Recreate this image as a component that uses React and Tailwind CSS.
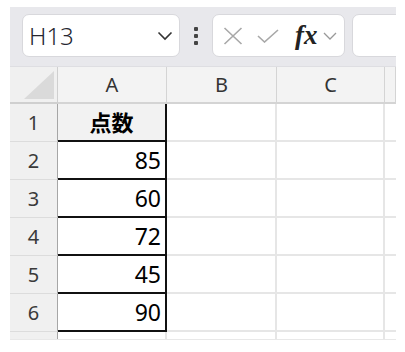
import React from "react";

const rows = [
  { n: 1, v: "点数", head: true },
  { n: 2, v: "85" },
  { n: 3, v: "60" },
  { n: 4, v: "72" },
  { n: 5, v: "45" },
  { n: 6, v: "90" },
];

const font = { fontFamily: '"Noto Sans", "Noto Sans CJK JP", sans-serif' };

function Toolbar() {
  return (
    <div className="flex h-[60px] items-start bg-[#e8e8ec] pl-[12px] pt-[7px] border-b border-[#dedee2] overflow-hidden">
      {/* name box */}
      <div className="flex h-[43px] w-[158px] shrink-0 items-center justify-between rounded-[7px] border border-[#d8d8dc] bg-white pl-[6px] pr-[6px]">
        <span className="text-[24px] font-light text-[#262630] leading-none">H13</span>
        <svg width="16" height="10" viewBox="0 0 16 10" fill="none" stroke="#333" strokeWidth="1.6">
          <path d="M1.5 1.5 L8 8 L14.5 1.5" />
        </svg>
      </div>
      {/* dots */}
      <div className="flex h-[43px] w-[32px] shrink-0 flex-col items-center justify-center gap-[3px]">
        <span className="h-[4px] w-[4px] rounded-[1px] bg-[#444]" />
        <span className="h-[4px] w-[4px] rounded-[1px] bg-[#444]" />
        <span className="h-[4px] w-[4px] rounded-[1px] bg-[#444]" />
      </div>
      {/* formula buttons */}
      <div className="flex h-[43px] w-[133px] shrink-0 items-center rounded-[7px] border border-[#d8d8dc] bg-white pl-[10px]">
        <svg width="20" height="18" viewBox="0 0 20 18" fill="none" stroke="#a8a8a8" strokeWidth="1.6">
          <path d="M1.5 1 L18.5 17 M18.5 1 L1.5 17" />
        </svg>
        <svg className="ml-[14px]" width="22" height="14" viewBox="0 0 22 14" fill="none" stroke="#a8a8a8" strokeWidth="1.6">
          <path d="M1 7 L7.5 13 L21 1" />
        </svg>
        <span
          className="ml-[16px] text-[27px] font-bold italic leading-none text-[#222]"
          style={{ fontFamily: '"Liberation Serif", serif' }}
        >
          fx
        </span>
        <svg className="ml-[5px]" width="14" height="8" viewBox="0 0 14 8" fill="none" stroke="#999" strokeWidth="1.3">
          <path d="M1 1 L7 7 L13 1" />
        </svg>
      </div>
      {/* formula input */}
      <div className="ml-[7px] h-[43px] w-[80px] shrink-0 rounded-[7px] border border-[#d8d8dc] bg-white" />
    </div>
  );
}

function Grid() {
  return (
    <div className="grid grid-cols-[48px_109px_110px_108px_11px] grid-rows-[37px_38px_38px_38px_38px_38px_38px_7px] bg-white">
      {/* header row */}
      <div className="relative bg-[#f0f0f0] border-b-2 border-r border-[#cfcfcf]">
        <svg className="absolute right-[3px] bottom-[3px]" width="30" height="28" viewBox="0 0 30 28">
          <path d="M30 0 L30 28 L0 28 Z" fill="#dadada" />
        </svg>
      </div>
      {["A", "B", "C", ""].map((c, i) => (
        <div
          key={i}
          className="flex items-center justify-center bg-[#f3f3f3] border-b-2 border-r border-[#d4d4d4] text-[20px] text-[#333]"
        >
          {c}
        </div>
      ))}
      {rows.map((r) => (
        <React.Fragment key={r.n}>
          <div className="flex items-center justify-center bg-[#f0f0f0] border-b border-r border-b-[#dcdcdc] border-r-[#a6a6a6] text-[20px] text-[#3a3a3a]">
            {r.n}
          </div>
          <div
            className={
              r.head
                ? "flex items-center justify-center bg-[#f2f2f2] border-b-2 border-r-2 border-[#111] text-[22px] font-bold text-black"
                : "flex items-center justify-end pr-[4px] bg-white border-b-2 border-r-2 border-[#111] text-[23px] text-black"
            }
          >
            {r.v}
          </div>
          <div className="border-b-2 border-r-2 border-[#e6e6e6]" />
          <div className="border-b-2 border-r-2 border-[#e6e6e6]" />
          <div className="border-b-2 border-[#e6e6e6]" />
        </React.Fragment>
      ))}
      <div className="bg-[#f0f0f0] border-r border-[#a6a6a6]" />
      <div className="border-r-2 border-[#e6e6e6]" />
      <div className="border-r-2 border-[#e6e6e6]" />
      <div className="border-r-2 border-[#e6e6e6]" />
      <div />
    </div>
  );
}

export default function App() {
  return (
    <div className="h-[352px] w-[405px] bg-white pl-[10px] pt-[7px]" style={font}>
      <div className="w-[386px] overflow-hidden border-b border-[#e8e8e8]">
        <Toolbar />
        <Grid />
      </div>
    </div>
  );
}
